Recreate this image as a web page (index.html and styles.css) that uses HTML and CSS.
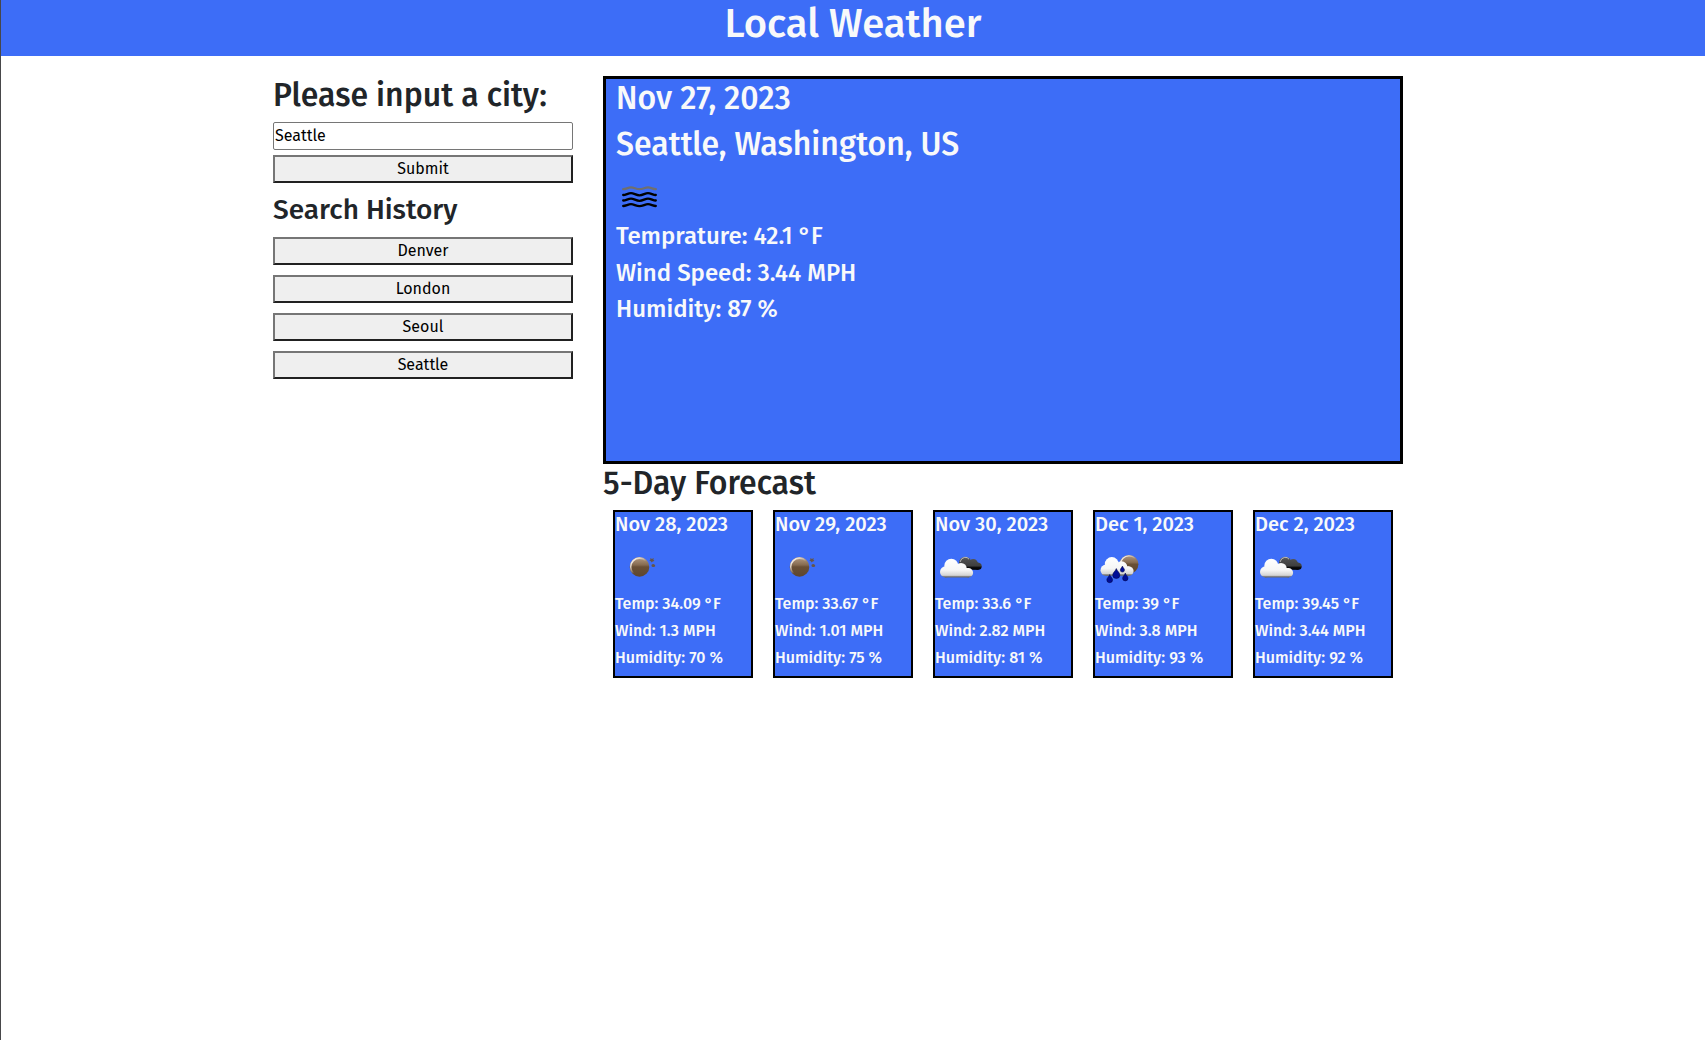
FILE: index.html
```
<!DOCTYPE html>
<html lang="en">
<head>
<meta charset="utf-8">
<title>Local Weather</title>
<link rel="stylesheet" href="styles.css">
</head>
<body>
<svg class="defs" width="0" height="0" aria-hidden="true">
  <defs>
    <linearGradient id="moon" x1="0" y1="0" x2="0" y2="1"><stop offset="0" stop-color="#b49c84"/><stop offset=".4" stop-color="#866b50"/><stop offset=".5" stop-color="#694f35"/><stop offset="1" stop-color="#5d462e"/></linearGradient>
    <linearGradient id="rim" x1="0" y1="0" x2=".7" y2=".7"><stop offset="0" stop-color="#f3ece4"/><stop offset=".25" stop-color="#efe6dc"/><stop offset=".75" stop-color="#efe6dc" stop-opacity="0"/></linearGradient>
    <linearGradient id="white" gradientUnits="userSpaceOnUse" x1="0" y1="15" x2="0" y2="33.6"><stop offset="0" stop-color="#fff"/><stop offset=".6" stop-color="#f6f6f6"/><stop offset=".88" stop-color="#d4d4d4"/><stop offset=".93" stop-color="#888"/><stop offset="1" stop-color="#666"/></linearGradient>
    <linearGradient id="dark" gradientUnits="userSpaceOnUse" x1="0" y1="12" x2="0" y2="26"><stop offset="0" stop-color="#6a6a6a"/><stop offset=".3" stop-color="#4c4c4c"/><stop offset=".7" stop-color="#3e3e3e"/><stop offset=".82" stop-color="#0c0c0c"/><stop offset="1" stop-color="#000"/></linearGradient>
    <g id="cloud" fill="url(#white)">
      <circle cx="16.3" cy="21.8" r="7"/><circle cx="10.6" cy="27.9" r="5.6"/><circle cx="26" cy="24.7" r="5.8"/><circle cx="33.4" cy="28.8" r="4.7"/><rect x="10" y="24" width="24" height="9.5"/>
    </g>
    <symbol id="clear" viewBox="0 0 50 50">
      <circle cx="24.5" cy="22.9" r="9.8" fill="url(#moon)"/>
      <circle cx="24.5" cy="22.9" r="8.8" fill="none" stroke="url(#rim)" stroke-width="1.6"/>
      <path d="M35.300 14l1.700.9 1.700-.9-.3 1.800 1 1.300-1.800.3-.8 1.100-.9-1.200-1.500-.7 1.100-1.100zM36.800 20.600l1.500-.5 1.500.6.5 1.200-1.100 1.100-1.700.1-1.100-1.100z" fill="#655547"/>
    </symbol>
    <symbol id="cloudy" viewBox="0 0 50 50">
      <g fill="url(#dark)"><circle cx="30.300" cy="19" r="6.300"/><circle cx="38.300" cy="19.700" r="4.700"/><circle cx="43.200" cy="22.300" r="3.500"/><rect x="28" y="18.500" width="15.500" height="7.300"/></g>
      <path d="M25 18Q26 13.800 29.800 13.300Q32.500 13 34 15.200" fill="none" stroke="#bbb" stroke-width="1"/>
      <use href="#cloud"/>
    </symbol>
    <symbol id="rain" viewBox="0 0 50 50">
      <circle cx="34" cy="20.300" r="9.400" fill="url(#moon)"/>
      <circle cx="34" cy="20.300" r="8.500" fill="none" stroke="url(#rim)" stroke-width="1.300"/>
      <use href="#cloud" transform="translate(.5 -1.700)"/>
      <g fill="#000d96" stroke="#00043f" stroke-width=".5">
        <path d="M14.700 30.500C15.200 32.500 17.600 34 17.600 35.800A2.900 2.900 0 0 1 11.800 35.800C11.800 34 14.200 32.500 14.700 30.500Z"/>
        <path d="M21.300 24.500C22 27 24.900 28.700 24.900 31A3.600 3.500 0 0 1 17.700 31C17.700 28.700 20.600 27 21.300 24.500Z"/>
        <path d="M27.400 22C27.800 23.500 29.500 24.500 29.500 26A2.100 2.100 0 0 1 25.300 26C25.300 24.500 27 23.500 27.400 22Z"/>
        <path d="M30.300 29C30.800 31 33 32.500 33 34.200A2.700 2.700 0 0 1 27.600 34.200C27.600 32.500 29.800 31 30.300 29Z"/>
      </g>
    </symbol>
    <symbol id="mist" viewBox="0 0 50 50">
      <g fill="none" stroke-width="2.300" stroke-linecap="round" stroke-linejoin="round">
        <path stroke="#6f6f6f" d="M7.200 17.200C10 17.200 12 15.400 15 15.400S20 17.200 23.500 17.200S29 15.400 32 15.400S37 17.200 39.800 17.200"/>
        <path stroke="#000" d="M7.200 23C10 23 12 21.100 15 21.100S20 23.300 23.500 23.300S29 21.100 32 21.100S37 23 39.800 23M7.200 28.500C10 28.500 12 26.600 15 26.600S20 28.800 23.500 28.800S29 26.600 32 26.600S37 28.500 39.800 28.500M7.200 34C10 34 12 32.200 15 32.200S20 34.200 23.500 34.200S29 32.200 32 32.200S37 34 39.800 34"/>
      </g>
    </symbol>
  </defs>
</svg>
<header class="banner"><h1>Local Weather</h1></header>
<main class="layout">
  <aside class="search">
    <h2>Please input a city:</h2>
    <input class="city" type="text" value="Seattle" aria-label="City">
    <button class="button">Submit</button>
    <h3>Search History</h3>
    <div class="history">
      <button class="button">Denver</button>
      <button class="button">London</button>
      <button class="button">Seoul</button>
      <button class="button">Seattle</button>
    </div>
  </aside>
  <div class="results">
    <section class="today">
      <h2>Nov 2<span class="kern-7">7</span>, 2023</h2>
      <h2>Seattle, Washington, US</h2>
      <svg class="icon"><use href="#mist"/></svg>
      <h4>Temprature: 42.1 °F</h4>
      <h4>Wind Speed: 3.44 MPH</h4>
      <h4>Humidity: 87 %</h4>
    </section>
    <h2>5-Day Forecast</h2>
    <section class="forecast">
      <article class="card"><h5>Nov 28, 2023</h5><svg class="icon"><use href="#clear"/></svg><h6>Temp: 34.09 °F</h6><h6>Wind: 1.3 MPH</h6><h6>Humidity: 70 %</h6></article>
      <article class="card"><h5>Nov 2<span class="kern-9">9</span>, 2023</h5><svg class="icon"><use href="#clear"/></svg><h6>Temp: 33.67 °F</h6><h6>Wind: 1.01 MPH</h6><h6>Humidity: 75 %</h6></article>
      <article class="card"><h5>Nov 30, 2023</h5><svg class="icon"><use href="#cloudy"/></svg><h6>Temp: 33.6 °F</h6><h6>Wind: 2.82 MPH</h6><h6>Humidity: 81 %</h6></article>
      <article class="card"><h5>Dec 1, 2023</h5><svg class="icon"><use href="#rain"/></svg><h6>Temp: 39 °F</h6><h6>Wind: 3.8 MPH</h6><h6>Humidity: 93 %</h6></article>
      <article class="card"><h5>Dec 2, 2023</h5><svg class="icon"><use href="#cloudy"/></svg><h6>Temp: 3<span class="kern-9">9</span>.45 °F</h6><h6>Wind: 3.44 MPH</h6><h6>Humidity: 92 %</h6></article>
    </section>
  </div>
</main>
</body>
</html>
```
FILE: styles.css
```
*, *::before, *::after { box-sizing: border-box; }

body {
  margin: 0;
  min-height: 100vh;
  border-left: 1px solid #47474a;
  background: #fff;
  color: #212529;
  font: 400 16px/1.5 "Fira Sans", "Noto Sans", sans-serif;
}

h1, h2, h3, h4, h5, h6 {
  margin: 0 0 8px;
  font-weight: 500;
  line-height: 1.2;
  white-space: nowrap;
}
h1 { font-size: 40px; }
h2 { font-size: 32px; }
h3 { font-size: 28px; }
h4 { font-size: 24px; }
h5 { font-size: 20px; }
h6 { font-size: 16px; line-height: 19px; }

/* tighten digits that sit before a comma or a point */
.kern-7 { letter-spacing: -.08em; }
.kern-9 { letter-spacing: -.04em; }

.defs { position: absolute; }
.icon { display: block; width: 50px; height: 50px; }

.banner {
  display: flow-root;
  background: #3d6df7;
  color: #f8f9fa;
  text-align: center;
}

.layout {
  display: flex;
  gap: 30px;
  width: 1160px;
  margin: 0 auto;
  padding-top: 20px;
}

.search {
  display: flex;
  flex-direction: column;
  width: 300px;
}
.search h3 { margin: 10px 0; }

.city, .button {
  width: 100%;
  height: 28px;
  font: inherit;
  color: #000;
}
.city {
  margin-bottom: 5px;
  padding: 0 1px 2px;
  border: 1px solid #767676;
  border-radius: 2px;
  background: #fff;
}
.button {
  padding: 0;
  border: 2px solid;
  border-color: #767676 #212121 #212121 #767676;
  border-radius: 0;
  background: #efefef;
  line-height: 24px;
}
.history {
  display: flex;
  flex-direction: column;
  gap: 10px;
}

.results { width: 800px; }

.today {
  height: 388px;
  padding: 0 10px;
  border: 3px solid #000;
  background: #3d6df7;
  color: #f8f9fa;
}

.forecast {
  display: flex;
  gap: 20px;
  padding: 0 10px;
}

.card {
  width: 140px;
  height: 168px;
  border: 2px solid #000;
  background: #3d6df7;
  color: #f8f9fa;
}
```
